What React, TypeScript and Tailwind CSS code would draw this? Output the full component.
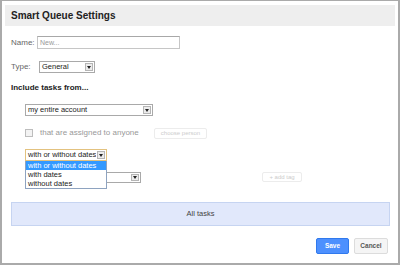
import React from "react";

function Arrow() {
  return (
    <div className="m-[1px] w-[8px] shrink-0 border border-[#b5b5b5] bg-[#ececec] flex items-center justify-center">
      <div className="w-0 h-0 border-l-[2px] border-r-[2px] border-t-[3px] border-l-transparent border-r-transparent border-t-[#222]" />
    </div>
  );
}

function Select({ value, width, focused }: { value?: string; width: string; focused?: boolean }) {
  return (
    <div
      className={`${width} h-[12px] flex bg-white border ${
        focused ? "border-[#e3c27f]" : "border-[#a9a9a9]"
      }`}
    >
      <div className="flex-1 pl-[2px] text-[7.5px] leading-[10px] text-[#222] whitespace-nowrap overflow-hidden">
        {value}
      </div>
      <Arrow />
    </div>
  );
}

export default function App() {
  const options = ["with or without dates", "with dates", "without dates"];

  return (
    <div className="w-[400px] h-[265px] bg-white border-t border-r-2 border-b-2 border-l-2 border-[#aaaaaa] pt-[4px] px-[3px] font-['Liberation_Sans',Arial,sans-serif]">
      <div className="h-[21px] bg-[#eeeeee] flex items-center pl-[6px] text-[10px] font-bold text-[#222]">
        Smart Queue Settings
      </div>

      <div className="pl-[6px] pr-[5px]">
        <div className="mt-[10px] h-[13px] flex items-center">
          <span className="w-[26px] text-[8px] text-[#666]">Name:</span>
          <div className="w-[143px] h-[13px] border border-[#c6c6c6] border-t-[#a8a8a8] pl-[2px] text-[7px] leading-[11px] text-[#999]">
            New...
          </div>
        </div>

        <div className="mt-[12px] h-[12px] flex items-center">
          <span className="w-[28px] text-[8px] text-[#666]">Type:</span>
          <Select value="General" width="w-[56px]" />
        </div>

        <div className="mt-[10px] h-[10px] leading-[10px] text-[8px] font-bold text-[#222]">
          Include tasks from...
        </div>

        <div className="pl-[14px]">
          <div className="mt-[11px]">
            <Select value="my entire account" width="w-[128px]" />
          </div>

          <div className="mt-[11px] h-[12px] flex items-center">
            <div className="w-[129px] flex items-center">
              <div className="w-[8px] h-[8px] border border-[#bdbdbd] bg-[#f3f3f3]" />
              <span className="ml-[7px] text-[8px] text-[#999] whitespace-nowrap">that are assigned to anyone</span>
            </div>
            <div className="w-[53px] h-[11px] border border-[#ececec] rounded-[2px] flex items-center justify-center text-[6px] text-[#cccccc]">
              choose person
            </div>
          </div>

          <div className="mt-[10px] relative z-10">
            <Select value="with or without dates" width="w-[82px]" focused />
            <div className="absolute left-0 top-[12px] w-[82px] bg-white border border-t-0 border-[#8ea3c0]">
              {options.map((o, i) => (
                <div
                  key={o}
                  className={`h-[9px] pl-[2px] text-[7.5px] leading-[9px] whitespace-nowrap ${
                    i === 0 ? "bg-[#3399ff] text-white" : "text-[#222]"
                  }`}
                >
                  {o}
                </div>
              ))}
            </div>
          </div>

          <div className="mt-[11px] h-[11px] flex items-start">
            <div className="w-[116px] h-[11px] flex bg-white border border-[#a9a9a9]">
              <div className="flex-1" />
              <Arrow />
            </div>
            <div className="ml-[121px] w-[40px] h-[10px] border border-[#ececec] rounded-[2px] flex items-center justify-center text-[6px] text-[#cccccc]">
              + add tag
            </div>
          </div>
        </div>

        <div className="mt-[19px] h-[24px] bg-[#e1e8fb] border border-[#c6d4f1] flex items-center justify-center text-[7.5px] text-[#444]">
          All tasks
        </div>

        <div className="mt-[12px] flex justify-end gap-[5px] pr-[2px]">
          <button className="w-[33px] h-[16px] bg-[#4d90fe] border border-[#3079ed] rounded-[2px] text-[6.5px] font-bold text-white">
            Save
          </button>
          <button className="w-[34px] h-[16px] bg-[#f5f5f5] border border-[#dcdcdc] rounded-[2px] text-[6.5px] font-bold text-[#555]">
            Cancel
          </button>
        </div>
      </div>
    </div>
  );
}
